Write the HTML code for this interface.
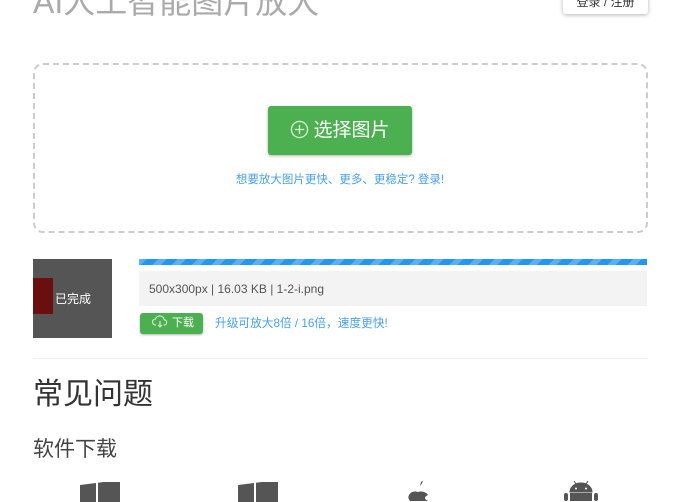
<!DOCTYPE html>
<html><head><meta charset="utf-8"><style>
*{margin:0;padding:0;box-sizing:border-box}
body{width:700px;height:498px;overflow:hidden;background:#fff;font-family:"Liberation Sans","Noto Sans CJK SC",sans-serif;position:relative}
.abs{position:absolute}
</style></head><body>
<div class="abs" style="left:33px;top:-18px;font-size:32px;color:#aaa;white-space:nowrap;line-height:40px">AI人工智能图片放大</div>
<div class="abs" style="left:563px;top:-8px;width:85px;height:22px;background:#fff;border-radius:3px;box-shadow:0 1px 4px rgba(0,0,0,.3);font-size:12px;color:#333;text-align:center;line-height:20px">登录 / 注册</div>
<div class="abs" style="left:33px;top:63px;width:615px;height:170px;border:2px dashed #ccc;border-radius:10px"></div>
<div class="abs" style="left:268px;top:106px;width:144px;height:49px;background:#4caf50;border-radius:3px;box-shadow:0 1px 3px rgba(0,0,0,.3);color:#fff;font-size:19px;line-height:49px;text-align:center">
<svg width="19" height="19" viewBox="0 0 20 20" style="vertical-align:-3px;margin-right:4px"><circle cx="10" cy="10" r="8.5" fill="none" stroke="#d8efd8" stroke-width="1.4"/><path d="M10 5v10M5 10h10" stroke="#d8efd8" stroke-width="1.4"/></svg>选择图片</div>
<div class="abs" style="left:0;width:680px;top:171px;text-align:center;font-size:11.5px;color:#4a9fe8">想要放大图片更快、更多、更稳定? 登录!</div>
<div class="abs" style="left:33px;top:259px;width:79px;height:79px;background:#555"></div>
<div class="abs" style="left:33px;top:278px;width:20px;height:36px;background:#6a0f0f"></div>
<div class="abs" style="left:55px;top:290px;font-size:12px;color:#fff">已完成</div>
<div class="abs" style="left:139px;top:259px;width:508px;height:6px;background:repeating-linear-gradient(-45deg,#2196f3 0 8px,#5ab0f6 8px 14px)"></div>
<div class="abs" style="left:139px;top:271px;width:508px;height:35px;background:#f3f3f3;font-size:12px;color:#555;line-height:37px;padding-left:10px">500x300px | 16.03 KB | 1-2-i.png</div>
<div class="abs" style="left:140px;top:313px;width:63px;height:21px;background:#4caf50;border-radius:3px;box-shadow:0 1px 2px rgba(0,0,0,.3);color:#fff;font-size:11px;line-height:21px;padding-left:12px">
<svg width="16" height="13" viewBox="0 0 16 13" style="vertical-align:-2px;margin-right:4px"><path d="M4 10H3.5a3 3 0 0 1 0-6 4.5 4.5 0 0 1 8.7 0.8A2.6 2.6 0 0 1 12 10h-0.5M8 6v6M6 10l2 2 2-2" fill="none" stroke="#e0f2e0" stroke-width="1.1"/></svg>下载</div>
<div class="abs" style="left:215px;top:314px;font-size:11.7px;color:#4a9fe8">升级可放大8倍 / 16倍，速度更快!</div>
<div class="abs" style="left:33px;top:358px;width:615px;height:1px;background:#eee"></div>
<div class="abs" style="left:33px;top:374px;font-size:30px;color:#333;line-height:42px">常见问题</div>
<div class="abs" style="left:33px;top:435px;font-size:21px;color:#444;line-height:30px">软件下载</div>
<svg class="abs" style="left:80px;top:482px" width="42" height="20"><path d="M0 3l16-2v19H0zM18 0.7l22-2.7V20H18z" fill="#555"/></svg>
<svg class="abs" style="left:238px;top:482px" width="42" height="20"><path d="M0 3l16-2v19H0zM18 0.7l22-2.7V20H18z" fill="#555"/></svg>
<svg class="abs" style="left:402px;top:481px" width="36" height="20"><path d="M19 1q1-1 2-1-1 3-3 5zM8 20q-4-5 2-9 3-1 6 0 3-1 6 0 3 1 4 3-6 3 0 6z" fill="#555"/></svg>
<svg class="abs" style="left:561px;top:481px" width="40" height="20"><path d="M13 0l2 3M27 0l-2 3M9 11a11 9 0 0 1 22 0z" stroke="#555" stroke-width="1" fill="#555"/><circle cx="15" cy="7.5" r="1" fill="#fff"/><circle cx="25" cy="7.5" r="1" fill="#fff"/><rect x="9" y="12" width="22" height="8" fill="#555"/><rect x="3" y="12" width="4" height="8" rx="2" fill="#555"/><rect x="33" y="12" width="4" height="8" rx="2" fill="#555"/></svg>
</body></html>
